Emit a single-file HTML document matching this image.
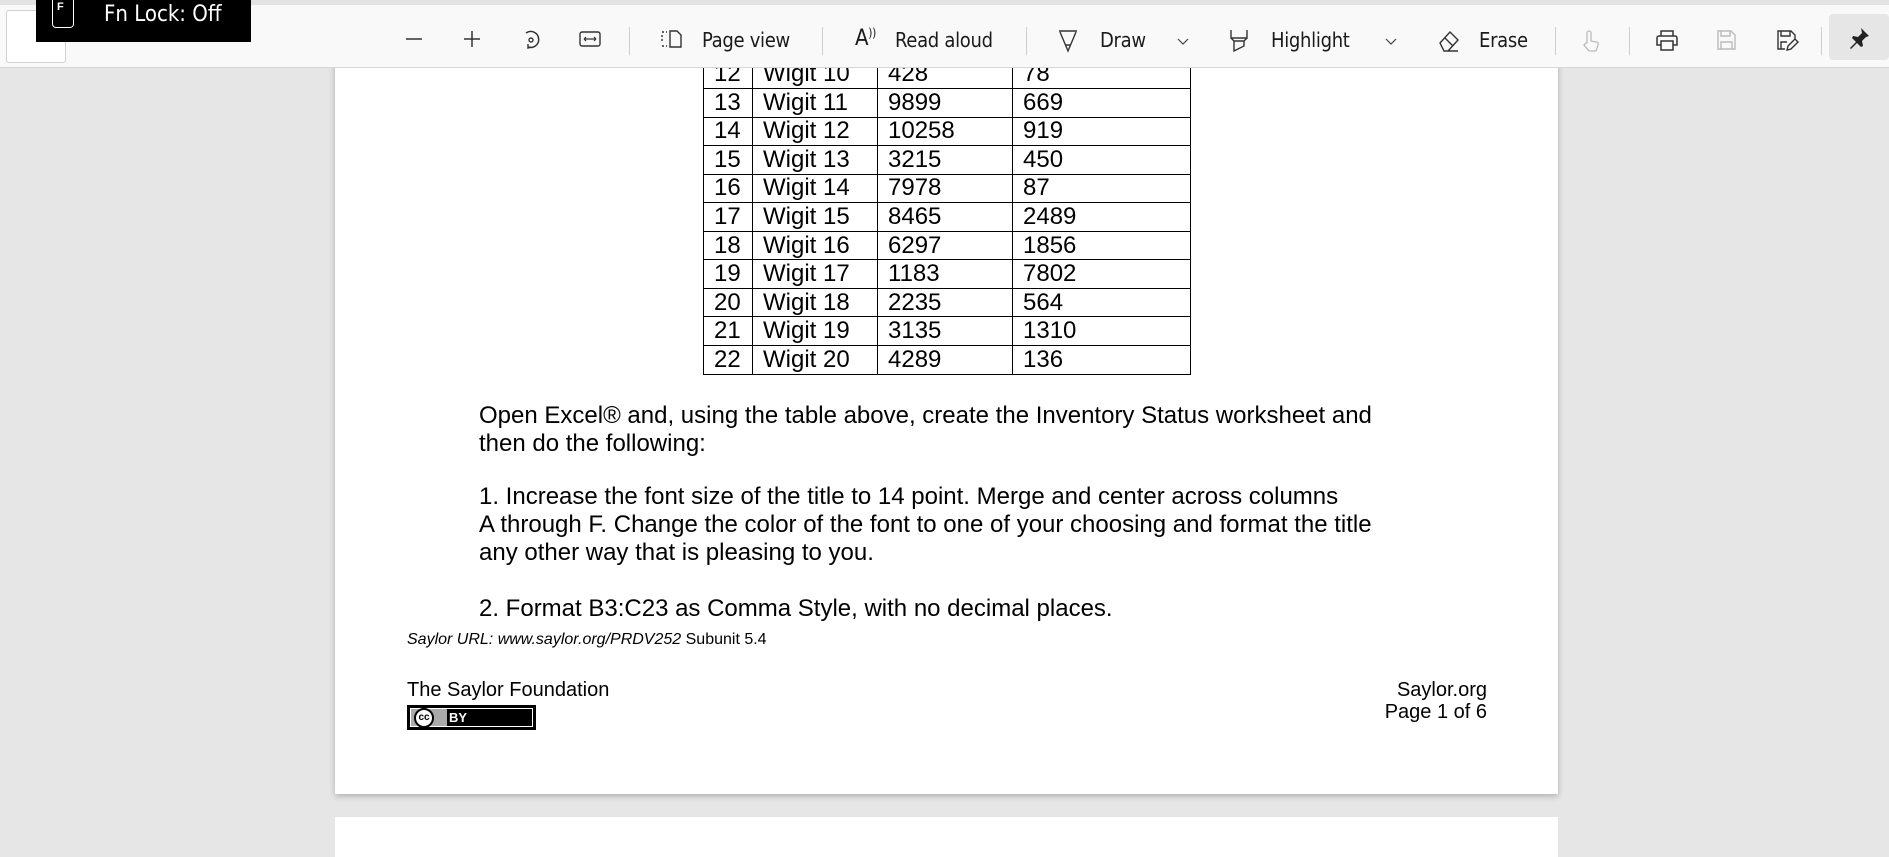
<!DOCTYPE html>
<html><head><meta charset="utf-8"><style>
*{margin:0;padding:0;box-sizing:border-box}
body{width:1889px;height:845px;overflow:hidden;background:#e6e6e6;position:relative;font-family:"Liberation Sans",Arial,sans-serif}
.tb{position:absolute;left:0;top:0;width:1889px;height:68px;background:#f9f9f9;border-top:5px solid #e3e3e3;border-bottom:1px solid #d6d6d6;z-index:5}
.t{position:absolute;top:23px;font-size:20px;color:#1b1b1b;font-family:"DejaVu Sans Condensed","Liberation Sans",sans-serif;letter-spacing:-0.3px}
.sep{position:absolute;top:22px;width:1px;height:28px;background:#cfcfcf}
.ic{position:absolute;top:24px}
.page{position:absolute;left:335px;top:60px;width:1223px;height:734px;background:#fff;box-shadow:0 2px 6px rgba(0,0,0,.25)}
.page2{position:absolute;left:335px;top:817px;width:1223px;height:40px;background:#fff}
table{position:absolute;left:368px;top:-0.5px;border-collapse:collapse;font-size:24px;color:#000}
td{border:1.3px solid #000;height:28.55px;line-height:26px;padding:0 0 0 10px;vertical-align:middle}
.p{position:absolute;left:144px;font-size:24px;color:#000;white-space:nowrap}
</style></head><body>
<div class="tb">
 <div style="position:absolute;left:6px;top:5px;width:60px;height:53px;border:1px solid #d0d0d0;border-radius:3px;background:#fff"></div>
 <svg class="ic" style="left:404px" width="20" height="20"><path d="M2 10h16" stroke="#333" stroke-width="1.5"/></svg>
 <svg class="ic" style="left:462px" width="20" height="20"><path d="M2 10h16M10 2v16" stroke="#333" stroke-width="1.5"/></svg>
 <svg class="ic" style="left:520px" width="22" height="22"><path d="M6 4a8 8 0 1 1 2 14" fill="none" stroke="#333" stroke-width="1.5"/><circle cx="11" cy="11" r="2" fill="none" stroke="#333" stroke-width="1.4"/><path d="M8 15l0 4 3-1" fill="none" stroke="#333" stroke-width="1.4"/></svg>
 <svg class="ic" style="left:579px" width="22" height="20"><rect x="1" y="3" width="20" height="14" rx="2" fill="none" stroke="#333" stroke-width="1.4"/><path d="M5 10h12M5 10l2-2M5 10l2 2M17 10l-2-2M17 10l-2 2" stroke="#333" stroke-width="1.2" fill="none"/></svg>
 <div class="sep" style="left:629px"></div>
 <svg class="ic" style="left:660px" width="24" height="20"><path d="M2 3h5M2 17h5M2 6v8" stroke="#333" stroke-width="1.4" stroke-dasharray="2 2" fill="none"/><path d="M10 2h7l4 4v12H10z" fill="none" stroke="#333" stroke-width="1.4"/></svg>
 <div class="t" style="left:702px">Page view</div>
 <div class="sep" style="left:822px"></div>
 <div class="t" style="left:855px;font-size:22px;top:21px">A<span style="font-size:12px;vertical-align:top">))</span></div>
 <div class="t" style="left:895px">Read aloud</div>
 <div class="sep" style="left:1026px"></div>
 <svg class="ic" style="left:1057px" width="22" height="24"><path d="M2 2h18M3 3l8 19 8-19M9 16h4" fill="none" stroke="#333" stroke-width="1.4"/></svg>
 <div class="t" style="left:1100px">Draw</div>
 <svg class="ic" style="left:1177px;top:33px" width="12" height="8"><path d="M1 1l5 5 5-5" fill="none" stroke="#444" stroke-width="1.2"/></svg>
 <svg class="ic" style="left:1228px" width="22" height="24"><path d="M3 1v8h16V1M3 9l3 3h10l3-3M6 12v10l10-5v-5" fill="none" stroke="#333" stroke-width="1.4"/></svg>
 <div class="t" style="left:1271px">Highlight</div>
 <svg class="ic" style="left:1385px;top:33px" width="12" height="8"><path d="M1 1l5 5 5-5" fill="none" stroke="#444" stroke-width="1.2"/></svg>
 <svg class="ic" style="left:1437px" width="24" height="24"><path d="M3 14l10-11 8 8-10 11H7zM8 9l8 8M7 22h14" fill="none" stroke="#333" stroke-width="1.4"/></svg>
 <div class="t" style="left:1479px">Erase</div>
 <div class="sep" style="left:1555px"></div>
 <svg class="ic" style="left:1580px" width="20" height="24"><path d="M7 14V4a2 2 0 0 1 4 0v8l5 1a2 2 0 0 1 2 3l-2 6H9l-5-6 2-2z" fill="none" stroke="#bbb" stroke-width="1.3"/></svg>
 <div class="sep" style="left:1629px"></div>
 <svg class="ic" style="left:1656px" width="22" height="22"><path d="M5 7V2h12v5M3 7h16a2 2 0 0 1 2 2v7h-4M5 16H1V9a2 2 0 0 1 2-2M5 12h12v9H5z" fill="none" stroke="#333" stroke-width="1.5"/></svg>
 <svg class="ic" style="left:1715px" width="22" height="22"><path d="M3 2h13l4 4v14H3zM6 2v5h9V2M6 20v-7h11v7" fill="none" stroke="#bbb" stroke-width="1.4"/></svg>
 <svg class="ic" style="left:1775px" width="24" height="22"><path d="M10 20H3V2h13l4 4v4M6 2v5h9V2M6 20v-7h6M12 21l1-4 7-7 3 3-7 7z" fill="none" stroke="#333" stroke-width="1.4"/></svg>
 <div class="sep" style="left:1821px"></div>
 <div style="position:absolute;left:1829px;top:9px;width:60px;height:46px;background:#e6e6e6;border-radius:4px"></div>
 <svg class="ic" style="left:1847px;top:21px" width="24" height="24"><path d="M14 2l8 8-3 1-4 4 1 5-2 1-4-4-6 6-1-1 6-6-4-4 1-2 5 1 4-4z" fill="#222"/></svg>
</div>
<div style="position:absolute;left:36px;top:0;width:215px;height:42px;background:#000;z-index:6">
 <div style="position:absolute;left:16px;top:-4px;width:22px;height:32px;border:1.5px solid #fff;border-top:none;border-radius:0 0 4px 4px"></div>
 <div style="position:absolute;left:21px;top:1px;color:#fff;font-size:11px;font-weight:bold">F</div>
 <div style="position:absolute;left:68px;top:2px;color:#fff;font-size:22px;font-family:'DejaVu Sans Condensed',sans-serif">Fn Lock: Off</div>
</div>
<div class="page">
 <table>
  <colgroup><col style="width:49px"><col style="width:125px"><col style="width:135px"><col style="width:178px"></colgroup>
  <tr><td>12</td><td>Wigit 10</td><td>428</td><td>78</td></tr>
  <tr><td>13</td><td>Wigit 11</td><td>9899</td><td>669</td></tr>
  <tr><td>14</td><td>Wigit 12</td><td>10258</td><td>919</td></tr>
  <tr><td>15</td><td>Wigit 13</td><td>3215</td><td>450</td></tr>
  <tr><td>16</td><td>Wigit 14</td><td>7978</td><td>87</td></tr>
  <tr><td>17</td><td>Wigit 15</td><td>8465</td><td>2489</td></tr>
  <tr><td>18</td><td>Wigit 16</td><td>6297</td><td>1856</td></tr>
  <tr><td>19</td><td>Wigit 17</td><td>1183</td><td>7802</td></tr>
  <tr><td>20</td><td>Wigit 18</td><td>2235</td><td>564</td></tr>
  <tr><td>21</td><td>Wigit 19</td><td>3135</td><td>1310</td></tr>
  <tr><td>22</td><td>Wigit 20</td><td>4289</td><td>136</td></tr>
 </table>
 <div class="p" style="top:342px">Open Excel® and, using the table above, create the Inventory Status worksheet and</div>
 <div class="p" style="top:370px">then do the following:</div>
 <div class="p" style="top:423px">1. Increase the font size of the title to 14 point. Merge and center across columns</div>
 <div class="p" style="top:451px">A through F. Change the color of the font to one of your choosing and format the title</div>
 <div class="p" style="top:479px">any other way that is pleasing to you.</div>
 <div class="p" style="top:535px">2. Format B3:C23 as Comma Style, with no decimal places.</div>
 <div style="position:absolute;left:72px;top:571px;font-size:16px"><i>Saylor URL: www.saylor.org/PRDV252</i> Subunit 5.4</div>
 <div style="position:absolute;left:72px;top:619px;font-size:20px">The Saylor Foundation</div>
 <div style="position:absolute;left:72px;top:645px;width:129px;height:25px;background:#000;border:2px solid #000;outline:1px solid #fff;outline-offset:-4px">
  <div style="position:absolute;left:2px;top:2px;width:36px;height:17px;background:#aaa"></div>
  <div style="position:absolute;left:5px;top:1px;width:20px;height:20px;border-radius:50%;background:#fff;border:2px solid #000;font-size:10px;font-weight:bold;text-align:center;line-height:16px">cc</div>
  <div style="position:absolute;left:40px;top:3px;color:#fff;font-size:13px;font-weight:bold">BY</div>
 </div>
 <div style="position:absolute;right:71px;top:619px;font-size:20px;text-align:right;line-height:22px">Saylor.org<br>Page 1 of 6</div>
</div>
<div class="page2"></div>
</body></html>
